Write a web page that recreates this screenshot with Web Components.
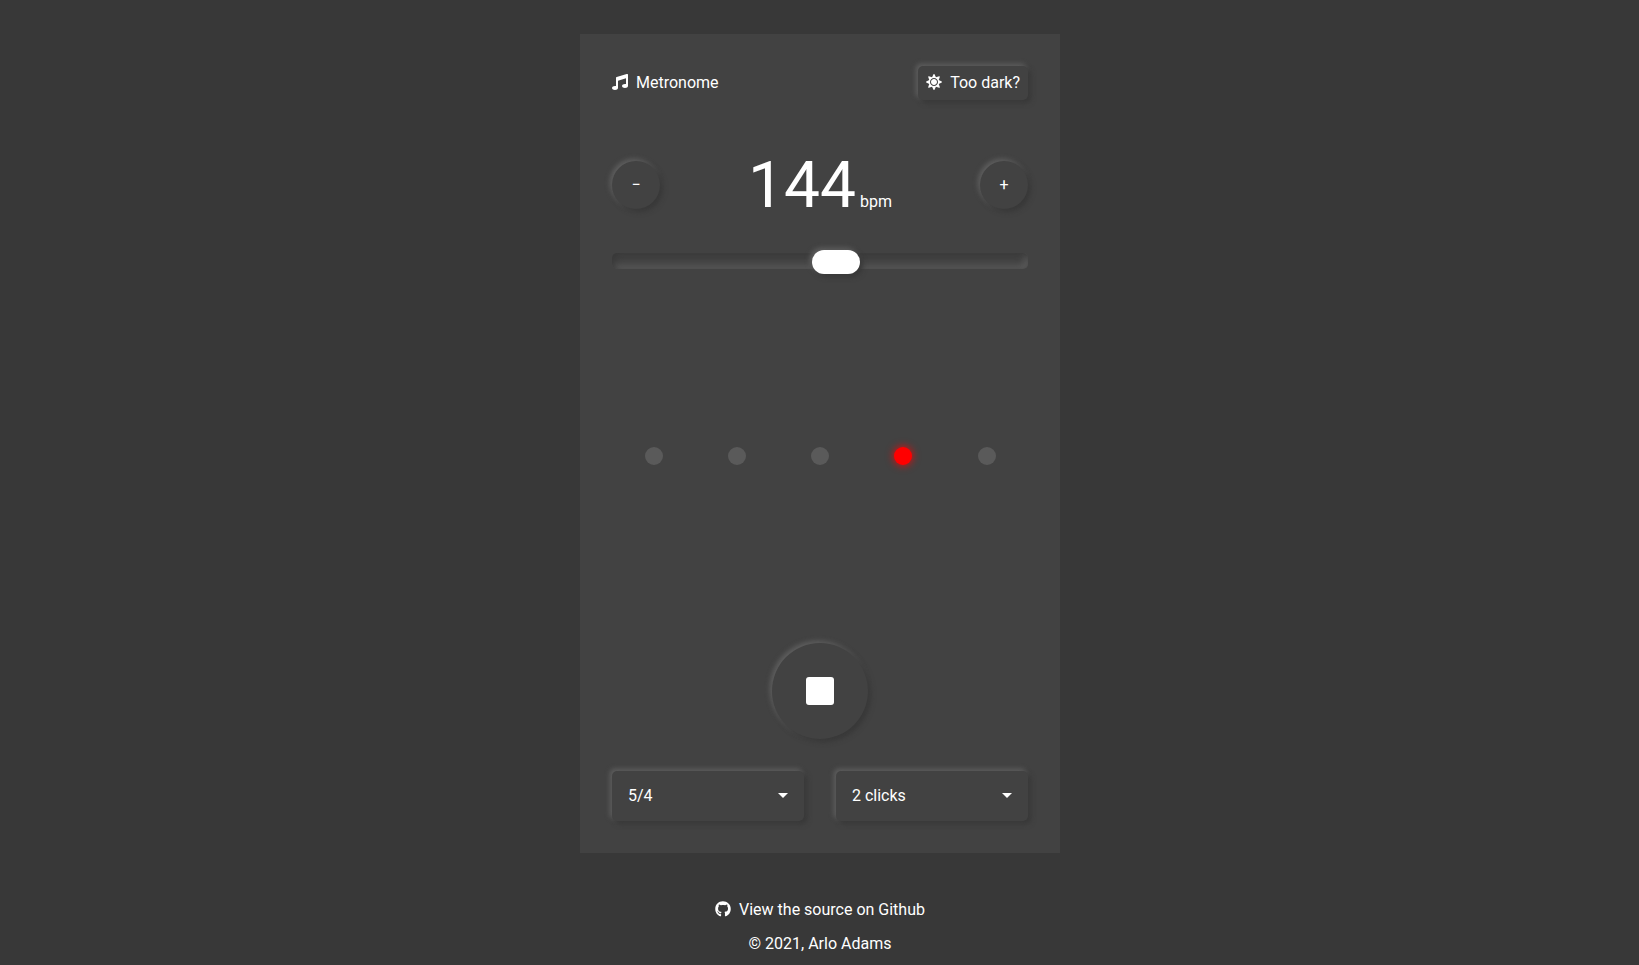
<!DOCTYPE html>
<html lang="en">
<head>
<meta charset="utf-8">
<title>Metronome</title>
<style>
html{height:100%}
body{margin:0;height:100%;overflow:hidden;background:#383838;color:#fff;font:16px Roboto,sans-serif;
--surface:#424242;--raised:3px 3px 5px #383838,-2px -2px 5px #626262}
</style>
</head>
<body>
<metronome-app></metronome-app>
<script>
const define=(name,html,setup)=>customElements.define(name,class extends HTMLElement{
  constructor(){
    super();
    this.attachShadow({mode:'open'}).innerHTML=html;
  }
  connectedCallback(){ if(setup) setup(this,this.shadowRoot); }
});

const icons={
  music:['0 0 512 512','M470.38 1.51L150.41 96A32 32 0 0 0 128 126.51v261.41A139 139 0 0 0 96 384c-53 0-96 28.66-96 64s43 64 96 64 96-28.66 96-64V214.32l256-75v184.61a138.4 138.4 0 0 0-32-3.93c-53 0-96 28.66-96 64s43 64 96 64 96-28.65 96-64V32a32 32 0 0 0-41.62-30.49z'],
  sun:['0 0 512 512','M256 160c-52.9 0-96 43.1-96 96s43.1 96 96 96 96-43.1 96-96-43.1-96-96-96zm246.4 80.5l-94.7-47.3 33.5-100.4c4.5-13.6-8.4-26.5-21.9-21.9l-100.4 33.5-47.4-94.8c-6.4-12.8-24.6-12.8-31 0l-47.3 94.7L92.7 70.8c-13.6-4.5-26.5 8.4-21.9 21.9l33.5 100.4-94.7 47.4c-12.8 6.4-12.8 24.6 0 31l94.7 47.3-33.5 100.5c-4.5 13.6 8.4 26.5 21.9 21.9l100.4-33.5 47.3 94.7c6.4 12.8 24.6 12.8 31 0l47.3-94.7 100.4 33.5c13.6 4.5 26.5-8.4 21.9-21.9l-33.5-100.4 94.7-47.3c13-6.5 13-24.7.2-31.1zm-155.9 106c-49.9 49.9-131.1 49.9-181 0-49.9-49.9-49.9-131.1 0-181 49.9-49.9 131.1-49.9 181 0 49.9 49.9 49.9 131.1 0 181z'],
  github:['0 0 496 512','M165.9 397.4c0 2-2.3 3.6-5.2 3.6-3.3.3-5.6-1.3-5.6-3.6 0-2 2.3-3.6 5.2-3.6 3-.3 5.6 1.3 5.6 3.6zm-31.1-4.5c-.7 2 1.3 4.3 4.3 4.9 2.6 1 5.6 0 6.2-2s-1.3-4.3-4.3-5.2c-2.6-.7-5.5.3-6.2 2.3zm44.2-1.7c-2.9.7-4.9 2.6-4.6 4.9.3 2 2.9 3.3 5.9 2.6 2.9-.7 4.9-2.6 4.6-4.6-.3-1.9-3-3.2-5.9-2.9zM244.8 8C106.1 8 0 113.3 0 252c0 110.9 69.8 205.8 169.5 239.2 12.8 2.3 17.3-5.6 17.3-12.1 0-6.2-.3-40.4-.3-61.4 0 0-70 15-84.7-29.8 0 0-11.4-29.1-27.8-36.6 0 0-22.9-15.7 1.6-15.4 0 0 24.9 2 38.6 25.8 21.9 38.6 58.6 27.5 72.9 20.9 2.3-16 8.8-27.1 16-33.7-55.9-6.2-112.3-14.3-112.3-110.5 0-27.5 7.6-41.3 23.6-58.9-2.6-6.5-11.1-33.3 2.6-67.9 20.9-6.5 69 27 69 27 20-5.6 41.5-8.5 62.8-8.5s42.8 2.9 62.8 8.5c0 0 48.1-33.6 69-27 13.7 34.7 5.2 61.4 2.6 67.9 16 17.7 25.8 31.5 25.8 58.9 0 96.5-58.9 104.2-114.8 110.5 9.2 7.9 17 22.9 17 46.4 0 33.7-.3 75.4-.3 83.6 0 6.5 4.6 14.4 17.3 12.1C428.2 457.8 496 362.9 496 252 496 113.3 383.5 8 244.8 8zM97.2 352.9c-1.3 1-1 3.3.7 5.2 1.6 1.6 3.9 2.3 5.2 1 1.3-1 1-3.3-.7-5.2-1.6-1.6-3.9-2.3-5.2-1zm-10.8-8.1c-.7 1.3.3 2.9 2.3 3.9 1.6 1 3.6.7 4.3-.7.7-1.3-.3-2.9-2.3-3.9-2-.6-3.6-.3-4.3.7zm32.4 35.6c-1.6 1.3-1 4.3 1.3 6.2 2.3 2.3 5.2 2.6 6.5 1 1.3-1.3.7-4.3-1.3-6.2-2.2-2.3-5.2-2.6-6.5-1zm-11.4-14.7c-1.6 1-1.6 3.6 0 5.9 1.6 2.3 4.3 3.3 5.6 2.3 1.6-1.3 1.6-3.9 0-6.2-1.4-2.3-4-3.3-5.6-2z']
};

define('icon-label',`<style>
:host{display:flex;align-items:center;gap:8px;line-height:18px;white-space:nowrap}
svg{width:16px;height:16px;margin-bottom:2px;fill:currentColor;display:block}
</style><svg><path></path></svg><span><slot></slot></span>`,(el,root)=>{
  const [box,d]=icons[el.getAttribute('icon')];
  root.querySelector('svg').setAttribute('viewBox',box);
  root.querySelector('path').setAttribute('d',d);
});

define('raised-button',`<style>
:host{display:block}
button{display:block;margin:0;border:0;padding:8px;border-radius:5px;background:var(--surface);color:inherit;font:inherit;box-shadow:var(--raised)}
:host([round]) button{display:grid;place-items:center;padding:0;width:var(--size,48px);height:var(--size,48px);border-radius:50%}
</style><button><slot></slot></button>`);

define('tempo-display',`<style>
:host{display:flex;align-items:center;justify-content:space-between;height:48px}
.value{display:flex;align-items:baseline;gap:4px;line-height:48px;padding-top:18px}
.number{font-size:64px}
.sign{line-height:18px}
</style>
<raised-button round><span class="sign">−</span></raised-button>
<div class="value"><span class="number">144</span><span>bpm</span></div>
<raised-button round><span class="sign">+</span></raised-button>`);

define('tempo-slider',`<style>
:host{display:flex;align-items:center;height:16px;border-radius:5px;background:var(--surface);
box-shadow:inset 2px 2px 7px #363636,inset -3px -3px 7px #606060}
.thumb{flex:none;width:48px;height:24px;margin-top:2px;margin-left:200px;border-radius:12px;background:#fff;box-shadow:var(--raised)}
</style><div class="thumb"></div>`);

define('beat-dot',`<style>
:host{display:block;width:18px;height:18px;border-radius:50%;background:#5a5a5a}
:host([active]){background:red;box-shadow:0 0 8px red}
</style>`);

define('beat-row',`<style>
:host{display:grid;grid-template-columns:repeat(5,83.2px);place-items:center;padding-left:.2px}
</style><slot></slot>`);

define('select-box',`<style>
:host{display:flex;flex:1;align-items:center;justify-content:space-between;box-sizing:border-box;height:50px;padding:0 16px;border-radius:5px;background:var(--surface);box-shadow:var(--raised);line-height:18px}
svg{display:block;width:10px;height:5px;margin-bottom:1px;fill:#fff}
</style><span><slot></slot></span><svg viewBox="0 0 10 5"><path d="M0 0l5 5 5-5z"/></svg>`);

define('metronome-app',`<style>
:host{display:flex;flex-direction:column;align-items:center;box-sizing:border-box;height:100%;padding-left:1px}
main{box-sizing:border-box;display:flex;flex-direction:column;width:480px;height:819px;margin-top:34px;padding:32px;background:var(--surface)}
header{display:flex;justify-content:space-between;align-items:center;height:34px}
tempo-display{margin-top:61px}
tempo-slider{margin-top:44px}
beat-row{flex:1}
.play{display:flex;justify-content:center;--size:96px}
.stop{display:block;width:28px;height:28px;border-radius:3px;background:#fff}
.selects{display:flex;gap:32px;margin-top:32px}
footer{display:flex;flex-direction:column;align-items:center;gap:16px;margin-top:48px;line-height:18px}
</style>
<main>
<header><icon-label icon="music">Metronome</icon-label><raised-button><icon-label icon="sun">Too dark?</icon-label></raised-button></header>
<tempo-display></tempo-display>
<tempo-slider></tempo-slider>
<beat-row><beat-dot></beat-dot><beat-dot></beat-dot><beat-dot></beat-dot><beat-dot active></beat-dot><beat-dot></beat-dot></beat-row>
<div class="play"><raised-button round><span class="stop"></span></raised-button></div>
<div class="selects"><select-box>5/4</select-box><select-box>2 clicks</select-box></div>
</main>
<footer><icon-label icon="github">View the source on Github</icon-label><span>© 2021, Arlo Adams</span></footer>`);
</script>
</body>
</html>
